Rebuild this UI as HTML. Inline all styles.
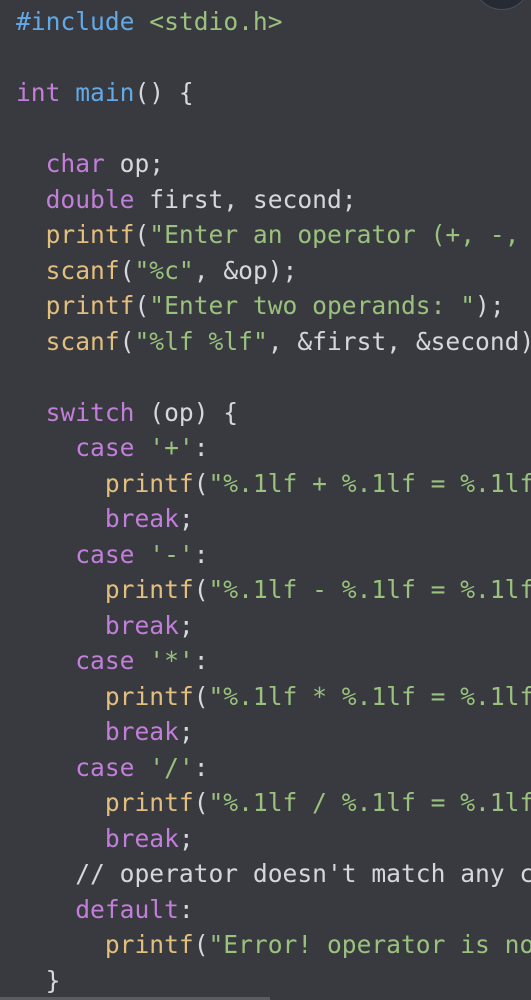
<!DOCTYPE html>
<html><head><meta charset="utf-8"><style>
html,body{margin:0;padding:0;background:#383a40;width:531px;height:1000px;overflow:hidden;position:relative}
pre{margin:0;position:absolute;left:16px;right:0;top:4px;overflow:hidden;font-family:"DejaVu Sans Mono","Liberation Mono",monospace;font-size:24.6px;line-height:35.5px;color:#d4d7dc;white-space:pre}
.k{color:#c27fd9}.b{color:#62a9e6}.g{color:#9ac27d}.y{color:#e3bf7d}
.circ{position:absolute;left:473px;top:-48px;width:58px;height:58px;border-radius:50%;background:#262a33;border:1px solid #4a4e56;box-sizing:border-box}
.bar{position:absolute;left:0;top:997px;width:270px;height:3px;background:#5a5c62}
</style></head><body>
<div class="circ"></div>
<pre><span class="b">#include</span> <span class="g">&lt;stdio.h&gt;</span>

<span class="k">int</span> <span class="b">main</span>() {

  <span class="k">char</span> op;
  <span class="k">double</span> first, second;
  <span class="y">printf</span>(<span class="g">"Enter an operator (+, -, *</span>
  <span class="y">scanf</span>(<span class="g">"%c"</span>, &amp;op);
  <span class="y">printf</span>(<span class="g">"Enter two operands: "</span>);
  <span class="y">scanf</span>(<span class="g">"%lf %lf"</span>, &amp;first, &amp;second);

  <span class="k">switch</span> (op) {
    <span class="k">case</span> <span class="g">'+'</span>:
      <span class="y">printf</span>(<span class="g">"%.1lf + %.1lf = %.1lf</span>
      <span class="k">break</span>;
    <span class="k">case</span> <span class="g">'-'</span>:
      <span class="y">printf</span>(<span class="g">"%.1lf - %.1lf = %.1lf</span>
      <span class="k">break</span>;
    <span class="k">case</span> <span class="g">'*'</span>:
      <span class="y">printf</span>(<span class="g">"%.1lf * %.1lf = %.1lf</span>
      <span class="k">break</span>;
    <span class="k">case</span> <span class="g">'/'</span>:
      <span class="y">printf</span>(<span class="g">"%.1lf / %.1lf = %.1lf</span>
      <span class="k">break</span>;
    // operator doesn't match any ca
    <span class="k">default</span>:
      <span class="y">printf</span>(<span class="g">"Error! operator is not</span>
  }
</pre>
<div class="bar"></div>
</body></html>
